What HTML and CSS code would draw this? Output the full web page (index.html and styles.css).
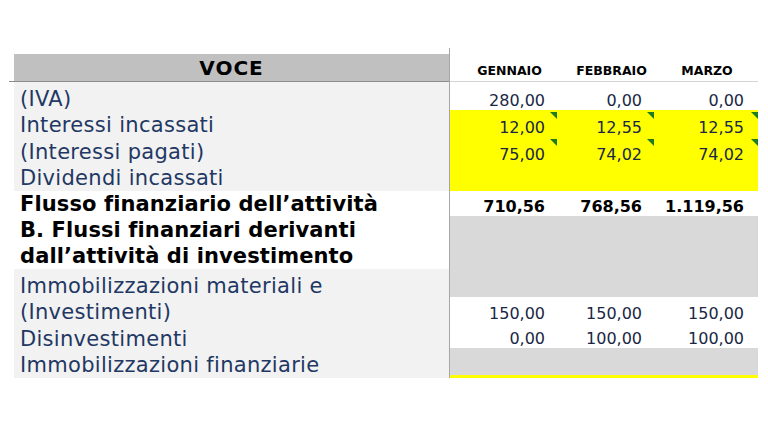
FILE: index.html
```html
<!DOCTYPE html>
<html lang="it">
<head>
<meta charset="utf-8">
<title>Flussi finanziari</title>
<link rel="stylesheet" href="styles.css">
</head>
<body>
<div class="sheet">
  <div class="labels">
    <div class="lhead"><div class="band">VOCE</div></div>
    <div class="lblock gray">
      <div>(IVA)</div>
      <div>Interessi incassati</div>
      <div>(Interessi pagati)</div>
      <div>Dividendi incassati</div>
    </div>
    <div class="lblock strong">
      <div>Flusso finanziario dell’attività</div>
      <div>B. Flussi finanziari derivanti</div>
      <div>dall’attività di investimento</div>
    </div>
    <div class="lblock gray">
      <div>Immobilizzazioni materiali e</div>
      <div>(Investimenti)</div>
      <div>Disinvestimenti</div>
      <div>Immobilizzazioni finanziarie</div>
    </div>
  </div>
  <div class="data">
    <div class="drow head">
      <span class="h1">GENNAIO</span><span class="h2">FEBBRAIO</span><span class="h3">MARZO</span>
    </div>
    <div class="drow r28"><span>280,00</span><span>0,00</span><span>0,00</span></div>
    <div class="drow r27 yellow"><span>12,00<i class="flag"></i></span><span>12,55<i class="flag"></i></span><span>12,55<i class="flag"></i></span></div>
    <div class="drow r27 yellow"><span>75,00<i class="flag"></i></span><span>74,02<i class="flag"></i></span><span>74,02<i class="flag"></i></span></div>
    <div class="drow r27 yellow"><span></span><span></span><span></span></div>
    <div class="drow r25 bold"><span>710,56</span><span>768,56</span><span>1.119,56</span></div>
    <div class="drow r81 grey"><span></span><span></span><span></span></div>
    <div class="drow r26"><span>150,00</span><span>150,00</span><span>150,00</span></div>
    <div class="drow r25"><span>0,00</span><span>100,00</span><span>100,00</span></div>
    <div class="drow r27 grey"><span></span><span></span><span></span></div>
    <div class="drow r3 yellow"><span></span><span></span><span></span></div>
  </div>
</div>
</body>
</html>
```

FILE: styles.css
```css
html, body {
  margin: 0;
  padding: 0;
  background: #ffffff;
}

body {
  font-family: "DejaVu Sans", Verdana, sans-serif;
  width: 768px;
  height: 425px;
  overflow: hidden;
}

.sheet {
  display: flex;
  margin: 48px 0 0 9px;
}

.labels {
  width: 440px;
}

.lhead {
  padding: 6px 0 0 5px;
  border-bottom: 1px solid #8c8c8c;
}

.band {
  height: 27px;
  line-height: 29px;
  background: #c0c0c0;
  text-align: center;
  font-weight: bold;
  font-size: 20px;
  letter-spacing: 1px;
  color: #000;
}

.lblock {
  margin-left: 5px;
  font-size: 21px;
  color: #1f3864;
  white-space: nowrap;
  padding-left: 6px;
}

.lblock.gray {
  background: #f2f2f2;
  padding-top: 4px;
  line-height: 26.25px;
  letter-spacing: 0.3px;
}

.lblock.strong {
  background: #ffffff;
  font-weight: bold;
  color: #000;
  line-height: 26px;
  padding-top: 0;
  letter-spacing: 0.1px;
}

.data {
  width: 308px;
  border-left: 1px solid #a6a6a6;
}

.drow {
  display: grid;
  grid-template-columns: 107px 97px 104px;
  align-items: end;
  font-size: 16px;
  line-height: 19px;
  color: #1a2744;
}

.drow span {
  position: relative;
  text-align: right;
  padding-right: 12px;
  height: 100%;
  display: flex;
  align-items: flex-end;
  justify-content: flex-end;
}

.drow span:last-child {
  padding-right: 14px;
}

.drow.head {
  height: 33px;
  border-bottom: 1px solid #d4d4d4;
  font-size: 12.5px;
  font-weight: bold;
  color: #000;
  line-height: 15px;
}

.drow.head span {
  justify-content: center;
}

.drow.head .h1 { padding: 0 0 3px 12px; }
.drow.head .h2 { padding: 0 0 3px 12px; }
.drow.head .h3 { padding: 0 0 3px 2px; }

.r28 { height: 28px; }
.r27 { height: 27px; }
.r26 { height: 26px; }
.r25 { height: 25px; }
.r81 { height: 81px; }
.r3 { height: 3px; }

.yellow { background: #ffff00; }
.grey { background: #d9d9d9; }
.bold { font-weight: bold; color: #000; }

.flag {
  position: absolute;
  top: 2px;
  right: 0;
  width: 0;
  height: 0;
  border-top: 7px solid #1e7b1e;
  border-left: 7px solid transparent;
}
```
